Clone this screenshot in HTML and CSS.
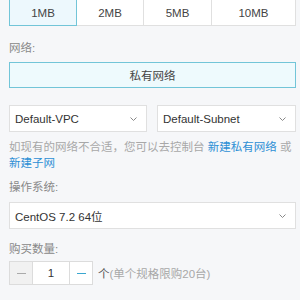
FILE: index.html
```html
<!DOCTYPE html>
<html lang="zh-CN">

<head>
  <meta charset="UTF-8">
  <meta name="viewport" content="width=device-width, initial-scale=1.0">
  <title>购买云服务器</title>
  <link rel="stylesheet" href="styles.css">
</head>

<body>
  <div class="form">

    <div class="band">
      <div class="band-item active">1MB</div>
      <div class="band-item w67">2MB</div>
      <div class="band-item">5MB</div>
      <div class="band-item grow">10MB</div>
    </div>

    <div class="label label-net">网络:</div>
    <div class="net-btn">私有网络</div>

    <div class="select-row">
      <div class="select">
        <span>Default-VPC</span>
        <svg class="chevron" width="7" height="4" viewBox="0 0 7 4"><polyline points="0.5,0.5 3.5,3.5 6.5,0.5" fill="none" stroke="#888" stroke-width="1"/></svg>
      </div>
      <div class="select">
        <span>Default-Subnet</span>
        <svg class="chevron" width="7" height="4" viewBox="0 0 7 4"><polyline points="0.5,0.5 3.5,3.5 6.5,0.5" fill="none" stroke="#888" stroke-width="1"/></svg>
      </div>
    </div>

    <p class="help">如现有的网络不合适，您可以去控制台 <a href="#">新建私有网络</a> 或 <a href="#">新建子网</a></p>

    <div class="label label-os">操作系统:</div>
    <div class="select select-os">
      <span>CentOS 7.2 64位</span>
      <svg class="chevron" width="7" height="4" viewBox="0 0 7 4"><polyline points="0.5,0.5 3.5,3.5 6.5,0.5" fill="none" stroke="#888" stroke-width="1"/></svg>
    </div>

    <div class="label label-count">购买数量:</div>
    <div class="stepper-row">
      <div class="stepper">
        <span class="step-btn minus"><i></i></span>
        <span class="step-val">1</span>
        <span class="step-btn plus"><i></i></span>
      </div>
      <span class="unit">个</span><span class="limit">(单个规格限购20台)</span>
    </div>

  </div>
</body>

</html>
```

FILE: styles.css
```css
body {
  margin: 0;
  background-color: #f6f7f9;
  font-family: "Liberation Sans", "Noto Sans CJK SC", sans-serif;
  font-size: 11.5px;
  color: #333;
}

.form {
  padding: 0 4px 0 9px;
}

.band {
  display: flex;
  height: 29px;
  margin-top: -3px;
}

.band-item {
  box-sizing: border-box;
  width: 68px;
  border: 1px solid #e0e0e0;
  background-color: #fff;
  display: flex;
  align-items: center;
  justify-content: center;
  color: #444;
  padding-top: 2px;
}

.band-item + .band-item {
  border-left: none;
}

.band-item.w67 {
  width: 67px;
}

.band-item.grow {
  flex: 1;
}

.band-item.active {
  border-color: #72c5d8;
  background-color: #edf8fd;
}

.label {
  line-height: 18px;
  color: #888;
}

.label-net {
  margin-top: 13px;
}

.net-btn {
  box-sizing: border-box;
  height: 26px;
  margin-top: 5px;
  border: 1px solid #72c5d8;
  background-color: #eefafd;
  display: flex;
  align-items: center;
  justify-content: center;
  color: #444;
}

.select-row {
  display: grid;
  grid-template-columns: 138px 139px;
  gap: 10px;
  margin-top: 17px;
}

.select {
  box-sizing: border-box;
  height: 27px;
  border: 1px solid #e0e0e0;
  background-color: #fff;
  display: flex;
  align-items: center;
  justify-content: space-between;
  padding: 0 9px 0 5px;
}

.help {
  margin: 7px 0 0;
  line-height: 16px;
  color: #a8a8a8;
}

.help a {
  color: #2d8fd5;
  text-decoration: none;
}

.label-os {
  margin-top: 7px;
}

.select-os {
  margin-top: 6px;
}

.label-count {
  margin-top: 11px;
}

.stepper-row {
  display: flex;
  align-items: center;
  margin-top: 3px;
}

.stepper {
  display: flex;
  height: 24px;
}

.step-btn {
  box-sizing: border-box;
  width: 24px;
  border: 1px solid #dcdcdc;
  display: flex;
  align-items: center;
  justify-content: center;
}

.step-btn i {
  display: block;
  width: 9px;
  height: 1px;
}

.minus {
  background-color: #f1f1f1;
}

.minus i {
  background-color: #aaa;
}

.plus {
  background-color: #fff;
}

.plus i {
  background-color: #3aa7d0;
}

.step-val {
  box-sizing: border-box;
  width: 36px;
  border-top: 1px solid #dcdcdc;
  border-bottom: 1px solid #dcdcdc;
  background-color: #fff;
  display: flex;
  align-items: center;
  justify-content: center;
  color: #333;
}

.unit {
  margin-left: 5px;
  color: #555;
}

.limit {
  color: #a8a8a8;
}
```
